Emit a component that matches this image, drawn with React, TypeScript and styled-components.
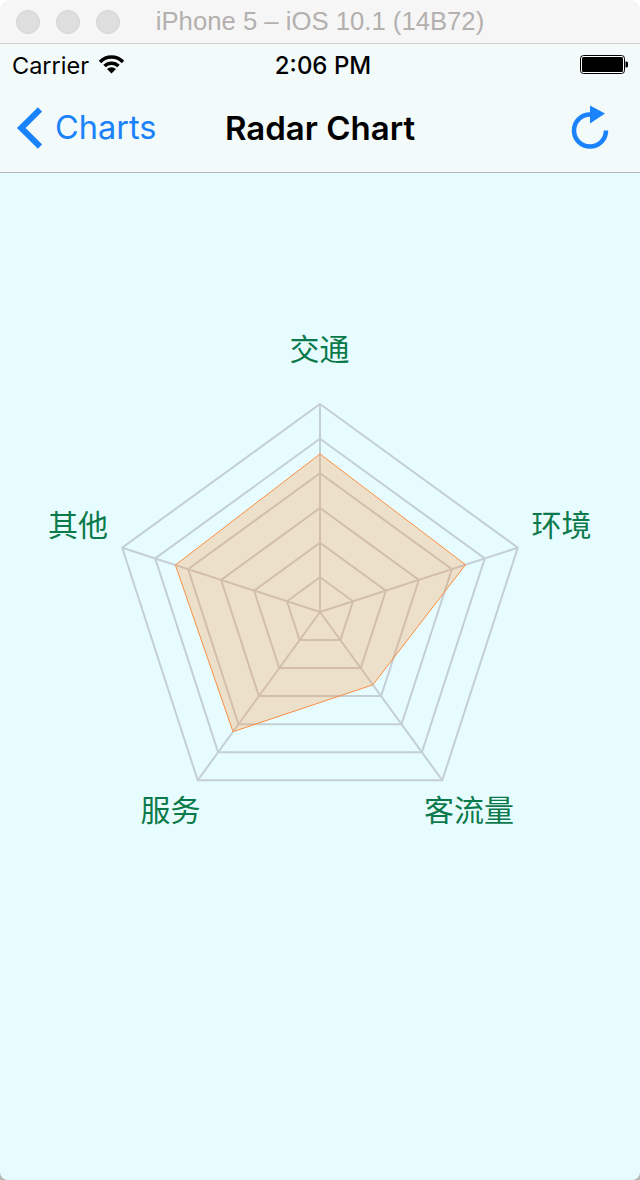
import React from 'react';
import styled, { createGlobalStyle } from 'styled-components';

const GlobalStyle = createGlobalStyle`
  html, body {
    margin: 0;
    padding: 0;
    background: #fff;
  }
`;

const Window = styled.div`
  width: 640px;
  height: 1180px;
  display: flex;
  flex-direction: column;
  overflow: hidden;
  background: linear-gradient(#fff 50%, #b8b8b8 50%);
  font-family: Inter, 'Liberation Sans', sans-serif;
`;

const TitleBar = styled.div`
  position: relative;
  height: 44px;
  flex: none;
  display: flex;
  align-items: center;
  justify-content: center;
  box-sizing: border-box;
  background: #f6f6f6;
  border-bottom: 1px solid #cfcfcf;
  border-radius: 10px 10px 0 0;
`;

const Lights = styled.div`
  position: absolute;
  left: 16px;
  top: 10px;
  display: flex;
  gap: 16px;
`;

const Light = styled.span`
  width: 24px;
  height: 24px;
  box-sizing: border-box;
  border-radius: 50%;
  background: #dedede;
  border: 1px solid #d4d4d4;
`;

const WindowTitle = styled.div`
  font-family: 'Liberation Sans', sans-serif;
  font-size: 25.7px;
  color: #b3b0ae;
  white-space: nowrap;
`;

const Header = styled.header`
  flex: none;
  height: 129px;
  box-sizing: border-box;
  background: #f2fafa;
  border-bottom: 1px solid #b0b8b8;
`;

const StatusBar = styled.div`
  height: 42px;
  padding: 0 12px 0 12px;
  display: grid;
  grid-template-columns: 1fr auto 1fr;
  align-items: center;
  color: #000;
`;

const Carrier = styled.div`
  display: flex;
  align-items: center;
  gap: 10px;
  font-size: 23.5px;
`;

const Clock = styled.div`
  padding-left: 6px;
  font-size: 24px;
  font-weight: 500;
`;

const BatteryWrap = styled.div`
  display: flex;
  justify-content: flex-end;
`;

const NavBar = styled.nav`
  height: 83px;
  padding: 0 16px;
  display: grid;
  grid-template-columns: 1fr auto 1fr;
  align-items: center;
`;

const BackLink = styled.div`
  display: flex;
  align-items: center;
  gap: 13px;
  font-size: 32.5px;
  color: #1a82fb;
`;

const NavTitle = styled.div`
  font-size: 33px;
  font-weight: 600;
  color: #000;
`;

const NavAction = styled.div`
  display: flex;
  justify-content: flex-end;
  padding-right: 15px;
`;

const Content = styled.main`
  flex: 1;
  background: #e7fcfe;
  border-radius: 0 0 8px 8px;
`;

const CX = 320;
const CY = 612;
const R = 208;
const RINGS = 6;
const LABEL_FONT = "'Noto Sans CJK SC', sans-serif";

const angles = [0, 1, 2, 3, 4].map((i) => -Math.PI / 2 + (i * 2 * Math.PI) / 5);

const point = (r: number, i: number) => ({
  x: CX + r * Math.cos(angles[i]),
  y: CY + r * Math.sin(angles[i]),
});

const polygon = (radii: number[]) =>
  radii
    .map((r, i) => {
      const p = point(r, i);
      return `${p.x.toFixed(1)},${p.y.toFixed(1)}`;
    })
    .join(' ');

const labels = [
  { text: '交通', x: 319.5, y: 360 },
  { text: '环境', x: 561.5, y: 536 },
  { text: '客流量', x: 469, y: 821 },
  { text: '服务', x: 170.5, y: 821 },
  { text: '其他', x: 78, y: 536 },
];

const dataRadii = [158, 153, 90, 148, 152];

function RadarChart() {
  return (
    <svg
      width="640"
      height="1007"
      viewBox="0 173 640 1007"
      style={{ display: 'block' }}
    >
      {Array.from({ length: RINGS }, (_, i) => {
        const r = (R * (i + 1)) / RINGS;
        return (
          <polygon
            key={i}
            points={polygon([r, r, r, r, r])}
            fill="none"
            stroke="#c4cfd4"
            strokeWidth="2"
          />
        );
      })}
      {angles.map((_, i) => {
        const p = point(R, i);
        return (
          <line key={i} x1={CX} y1={CY} x2={p.x} y2={p.y} stroke="#c4cfd4" strokeWidth="2" />
        );
      })}
      <polygon
        points={polygon(dataRadii)}
        fill="rgb(255, 140, 50)"
        fillOpacity="0.25"
        stroke="#fb8f3f"
        strokeWidth="1"
      />
      {labels.map((l) => (
        <text
          key={l.text}
          x={l.x}
          y={l.y}
          textAnchor="middle"
          fontFamily={LABEL_FONT}
          fontSize="30"
          fill="#0b7a4b"
        >
          {l.text}
        </text>
      ))}
    </svg>
  );
}

function App() {
  return (
    <Window>
      <GlobalStyle />
      <TitleBar>
        <Lights>
          <Light />
          <Light />
          <Light />
        </Lights>
        <WindowTitle>iPhone 5 – iOS 10.1 (14B72)</WindowTitle>
      </TitleBar>
      <Header>
        <StatusBar>
          <Carrier>
            Carrier
            <svg width="25" height="20" viewBox="0 0 25 20">
              <path d="M1 7 A16 16 0 0 1 24 7" fill="none" stroke="#000" strokeWidth="3.5" />
              <path d="M5.5 11 A10 10 0 0 1 19.5 11" fill="none" stroke="#000" strokeWidth="3.5" />
              <path d="M12.5 18.5 L8 14 A6.5 6.5 0 0 1 17 14 Z" fill="#000" />
            </svg>
          </Carrier>
          <Clock>2:06 PM</Clock>
          <BatteryWrap>
            <svg width="48" height="20" viewBox="0 0 48 20">
              <rect x="0.5" y="0.5" width="44" height="18" rx="3" fill="#fff" stroke="#000" />
              <rect x="2" y="2" width="41" height="15" rx="1.5" fill="#000" />
              <path d="M45.5 6.5 h1 a1.5 1.5 0 0 1 1.5 1.5 v3 a1.5 1.5 0 0 1 -1.5 1.5 h-1 Z" fill="#000" />
            </svg>
          </BatteryWrap>
        </StatusBar>
        <NavBar>
          <BackLink>
            <svg width="26" height="42" viewBox="0 0 26 42">
              <path d="M24 2.5 L5.2 21 L24 39.5" fill="none" stroke="#1a82fb" strokeWidth="6" />
            </svg>
            Charts
          </BackLink>
          <NavTitle>Radar Chart</NavTitle>
          <NavAction>
            <svg width="38" height="46" viewBox="0 0 38 46">
              <path
                d="M19 9.5 A16 16 0 1 0 35 25.5"
                fill="none"
                stroke="#1a82fb"
                strokeWidth="4.5"
              />
              <path d="M19 0.5 L34 8.5 L19 18.5 Z" fill="#1a82fb" />
            </svg>
          </NavAction>
        </NavBar>
      </Header>
      <Content>
        <RadarChart />
      </Content>
    </Window>
  );
}

export default App;
